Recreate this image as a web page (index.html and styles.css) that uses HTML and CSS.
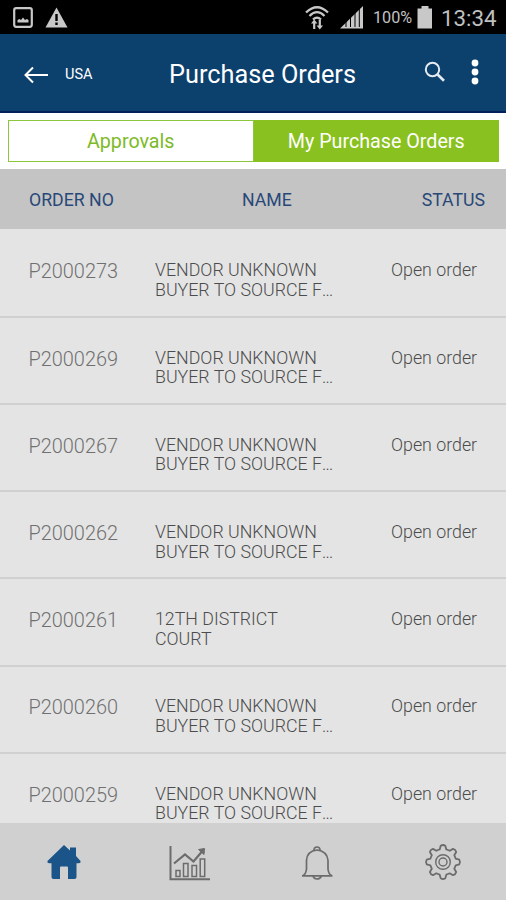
FILE: index.html
```
<!DOCTYPE html>
<html lang="en">
<head>
    <meta charset="UTF-8">
    <meta name="viewport" content="width=device-width, initial-scale=1.0">
    <title>Purchase Orders</title>
    <link rel="stylesheet" href="styles.css">
</head>
<body>
    <div class="status-bar">
        <svg class="icon-picture" width="20" height="22" viewBox="0 0 20 22">
            <rect x="1.2" y="1.2" width="17.6" height="18.6" rx="2" fill="none" stroke="#c8c8c8" stroke-width="2.2"/>
            <path d="M4.500 15.500v-2.500l2-1 1.500 1 2-2.500 2 2.500 2-1 1.500 1v2.500z" fill="#c8c8c8"/>
        </svg>
        <svg class="icon-warning" width="23" height="21" viewBox="0 0 23 21">
            <path d="M11.5 0.500L22.500 20.500H0.500z" fill="#c8c8c8"/>
            <path d="M11.500 7v7M11.500 15.500v2.500" stroke="#000" stroke-width="2.4"/>
        </svg>
        <svg class="icon-wifi" width="24" height="26" viewBox="0 0 24 26">
            <g fill="none" stroke="#c8c8c8" stroke-width="2.2">
                <path d="M1 7.500Q12-3 23 7.500"/>
                <path d="M4.500 11Q12 3.500 19.500 11"/>
                <path d="M8 14.500Q12 10.500 16 14.500"/>
            </g>
            <path d="M6 18.500l3.200-4 3.200 4H10.300V24H8.100v-5.500zM11.600 20.500h2.100V15h2.200v5.500H18l-3.200 4z" fill="#c8c8c8"/>
        </svg>
        <svg class="icon-signal" width="24" height="23" viewBox="0 0 24 23">
            <path d="M0 22.500L23 0v22.500z" fill="#c8c8c8"/>
            <path d="M6 0v21M10.500 0v21M15 0v21M19.300 0v21" stroke="#000" stroke-width="1"/>
        </svg>
        <span class="battery-level">100%</span>
        <svg class="icon-battery" width="16" height="23" viewBox="0 0 16 23">
            <path d="M4.500 0h7v2.500H15V22.500H0.500V2.500h4z" fill="#c8c8c8"/>
        </svg>
        <span class="clock">13:34</span>
    </div>

    <div class="header">
        <svg class="icon-back" width="25" height="18" viewBox="0 0 25 18">
            <path d="M24 9H2M9 1.500L1.500 9L9 16.500" fill="none" stroke="#fff" stroke-width="2"/>
        </svg>
        <span class="country">USA</span>
        <h1>Purchase Orders</h1>
        <svg class="icon-search" width="22" height="22" viewBox="0 0 22 22">
            <circle cx="8.500" cy="8.500" r="6.700" fill="none" stroke="#e4ebf2" stroke-width="2"/>
            <path d="M13.300 13.300L20 19.800" stroke="#e4ebf2" stroke-width="2.600"/>
        </svg>
        <svg class="icon-more" width="8" height="26" viewBox="0 0 8 26">
            <g fill="#fff">
                <circle cx="4" cy="4" r="3.400"/>
                <circle cx="4" cy="13" r="3.400"/>
                <circle cx="4" cy="22" r="3.400"/>
            </g>
        </svg>
    </div>

    <div class="tabs">
        <div class="tab">Approvals</div>
        <div class="tab tab-active">My Purchase Orders</div>
    </div>

    <div class="table-head">
        <div>ORDER NO</div>
        <div class="head-name">NAME</div>
        <div class="head-status">STATUS</div>
    </div>

    <div class="orders">
        <div class="order">
            <div class="order-no">P2000273</div>
            <div class="order-name">VENDOR UNKNOWN<br>BUYER TO SOURCE F<span class="dots">...</span></div>
            <div class="order-status">Open order</div>
        </div>
        <div class="order">
            <div class="order-no">P2000269</div>
            <div class="order-name">VENDOR UNKNOWN<br>BUYER TO SOURCE F<span class="dots">...</span></div>
            <div class="order-status">Open order</div>
        </div>
        <div class="order">
            <div class="order-no">P2000267</div>
            <div class="order-name">VENDOR UNKNOWN<br>BUYER TO SOURCE F<span class="dots">...</span></div>
            <div class="order-status">Open order</div>
        </div>
        <div class="order">
            <div class="order-no">P2000262</div>
            <div class="order-name">VENDOR UNKNOWN<br>BUYER TO SOURCE F<span class="dots">...</span></div>
            <div class="order-status">Open order</div>
        </div>
        <div class="order">
            <div class="order-no">P2000261</div>
            <div class="order-name">12TH DISTRICT<br>COURT</div>
            <div class="order-status">Open order</div>
        </div>
        <div class="order">
            <div class="order-no">P2000260</div>
            <div class="order-name">VENDOR UNKNOWN<br>BUYER TO SOURCE F<span class="dots">...</span></div>
            <div class="order-status">Open order</div>
        </div>
        <div class="order">
            <div class="order-no">P2000259</div>
            <div class="order-name">VENDOR UNKNOWN<br>BUYER TO SOURCE F<span class="dots">...</span></div>
            <div class="order-status">Open order</div>
        </div>
    </div>

    <div class="bottom-nav">
        <div class="nav-item">
            <svg width="44" height="44" viewBox="0 0 44 44">
                <path d="M22 5L28 10.500V7.500H34V16L38.500 21Q39 23.500 36 23.200H34.500V37Q34.500 39 32.500 39H26V27.500Q26 26.500 25 26.500H19Q18 26.500 18 27.500V39H11.500Q9.500 39 9.500 37V23.200H8Q5 23.500 5.500 21z" fill="#1a5488"/>
            </svg>
        </div>
        <div class="nav-item">
            <svg width="44" height="44" viewBox="0 0 44 44">
                <g fill="none" stroke="#6c6c6c">
                    <path d="M2.500 6V39.200H42" stroke-width="2"/>
                    <rect x="8" y="30.500" width="4" height="6" stroke-width="1.500"/>
                    <rect x="15.500" y="23.500" width="4.500" height="13" stroke-width="1.500"/>
                    <rect x="24" y="25.500" width="4.500" height="11" stroke-width="1.500"/>
                    <rect x="32.200" y="19" width="4.500" height="17.500" stroke-width="1.500"/>
                    <path d="M6 23.500L17 14.500L25.500 21.500L34 11.500" stroke-width="2.200"/>
                </g>
                <path d="M30.500 9.500L36.500 8.500L36 14.500z" fill="#6c6c6c" stroke="#6c6c6c"/>
            </svg>
        </div>
        <div class="nav-item">
            <svg width="44" height="44" viewBox="0 0 44 44">
                <g fill="none" stroke="#6c6c6c" stroke-width="1.700">
                    <path d="M7 35.800H37.500M8 35.500Q11 34 11.500 29V20.500Q12 11 22 10Q32 11 33 20.500V29Q33.500 34 36.500 35.500"/>
                    <path d="M19 10Q19 7 22 7T25 10"/>
                    <path d="M18 36Q19 39 22 39T26.500 36"/>
                </g>
            </svg>
        </div>
        <div class="nav-item">
            <svg width="44" height="44" viewBox="0 0 44 44">
                <g fill="none" stroke="#6c6c6c" stroke-width="1.800">
                    <path stroke-linejoin="round" d="M18.700 9.400L19.700 5.700Q22 4.300 24.300 5.700L25.300 9.400Q27 9.900 28.700 10.800L32 8.900Q34.600 9.500 35.200 12L33.300 15.300Q34.200 17 34.700 18.700L38.300 19.700Q39.700 22 38.300 24.300L34.700 25.300Q34.200 27 33.300 28.700L35.200 32Q34.600 34.600 32 35.200L28.700 33.300Q27 34.200 25.300 34.700L24.300 38.300Q22 39.700 19.700 38.300L18.700 34.700Q17 34.200 15.300 33.300L12 35.200Q9.500 34.600 8.900 32L10.800 28.700Q9.900 27 9.400 25.300L5.700 24.300Q4.300 22 5.700 19.700L9.400 18.700Q9.900 17 10.800 15.300L8.900 12Q9.500 9.500 12 8.900L15.300 10.800Q17 9.900 18.700 9.400z"/>
                    <circle cx="22" cy="22" r="7.300" stroke-width="1.400"/>
                    <circle cx="22" cy="22" r="4" stroke-width="1.400"/>
                </g>
            </svg>
        </div>
    </div>
</body>
</html>
```
FILE: styles.css
```
* {
    margin: 0;
    padding: 0;
    box-sizing: border-box;
}

body {
    font-family: Roboto, sans-serif;
    background-color: #fff;
    height: 900px;
    overflow: hidden;
    display: flex;
    flex-direction: column;
}

.status-bar {
    height: 34px;
    flex-shrink: 0;
    background-color: #000;
    color: #c0c0c0;
    display: flex;
    align-items: center;
    padding: 1px 9px 0 13px;
}

.icon-warning {
    margin-left: 12px;
}

.icon-wifi {
    margin-left: auto;
}

.icon-signal {
    margin-left: 11px;
}

.battery-level {
    font-size: 16.2px;
    margin-left: 9px;
    width: 40px;
}

.icon-battery {
    margin-left: 4px;
}

.clock {
    font-size: 22.3px;
    margin-left: 8px;
    width: 56px;
}

.header {
    height: 79px;
    flex-shrink: 0;
    background-color: #0c406d;
    border-bottom: 2px solid #06205c;
    color: #fff;
    display: flex;
    align-items: center;
    padding: 4px 27px 0 24px;
}

.country {
    font-size: 14.5px;
    margin-left: 16px;
    width: 104px;
}

.header h1 {
    font-size: 25.3px;
    font-weight: 400;
    white-space: nowrap;
}

.icon-search {
    margin-left: auto;
    margin-top: -5px;
}

.icon-more {
    margin-left: 25px;
    margin-top: -6px;
}

.tabs {
    height: 56px;
    flex-shrink: 0;
    display: flex;
    padding: 7px 7px 7px 8px;
}

.tab {
    flex: 1;
    border: 1px solid #8cc63f;
    color: #7dba28;
    font-size: 19.7px;
    line-height: 42px;
    text-align: center;
}

.tab-active {
    background-color: #89c120;
    border-color: #89c120;
    color: #fff;
}

.table-head {
    height: 60px;
    flex-shrink: 0;
    background-color: #c4c4c4;
    color: #284878;
    display: grid;
    grid-template-columns: 213px 1fr auto;
    align-items: center;
    padding: 1px 21px 0 29px;
    font-size: 17.7px;
}

.orders {
    flex: 1;
    overflow: hidden;
    background-color: #e4e4e4;
}

.order {
    height: 87.2px;
    border-bottom: 2px solid #d0d0d0;
    display: grid;
    grid-template-columns: 126.500px 236px 1fr;
    padding: 29.800px 0 0 28.500px;
    color: #4c4c4c;
    font-size: 17.8px;
    font-weight: 300;
    line-height: 19.7px;
}

.order:first-child {
    height: 88.800px;
    padding-top: 31.200px;
}

.dots {
    letter-spacing: -0.8px;
}

.order-no {
    font-size: 19.9px;
    line-height: 23px;
    color: #707070;
}

.bottom-nav {
    height: 77px;
    flex-shrink: 0;
    background-color: #d0d0d0;
    display: grid;
    grid-template-columns: repeat(4, 1fr);
    padding-left: 1px;
}

.nav-item {
    display: flex;
    justify-content: center;
    align-items: center;
}
```
